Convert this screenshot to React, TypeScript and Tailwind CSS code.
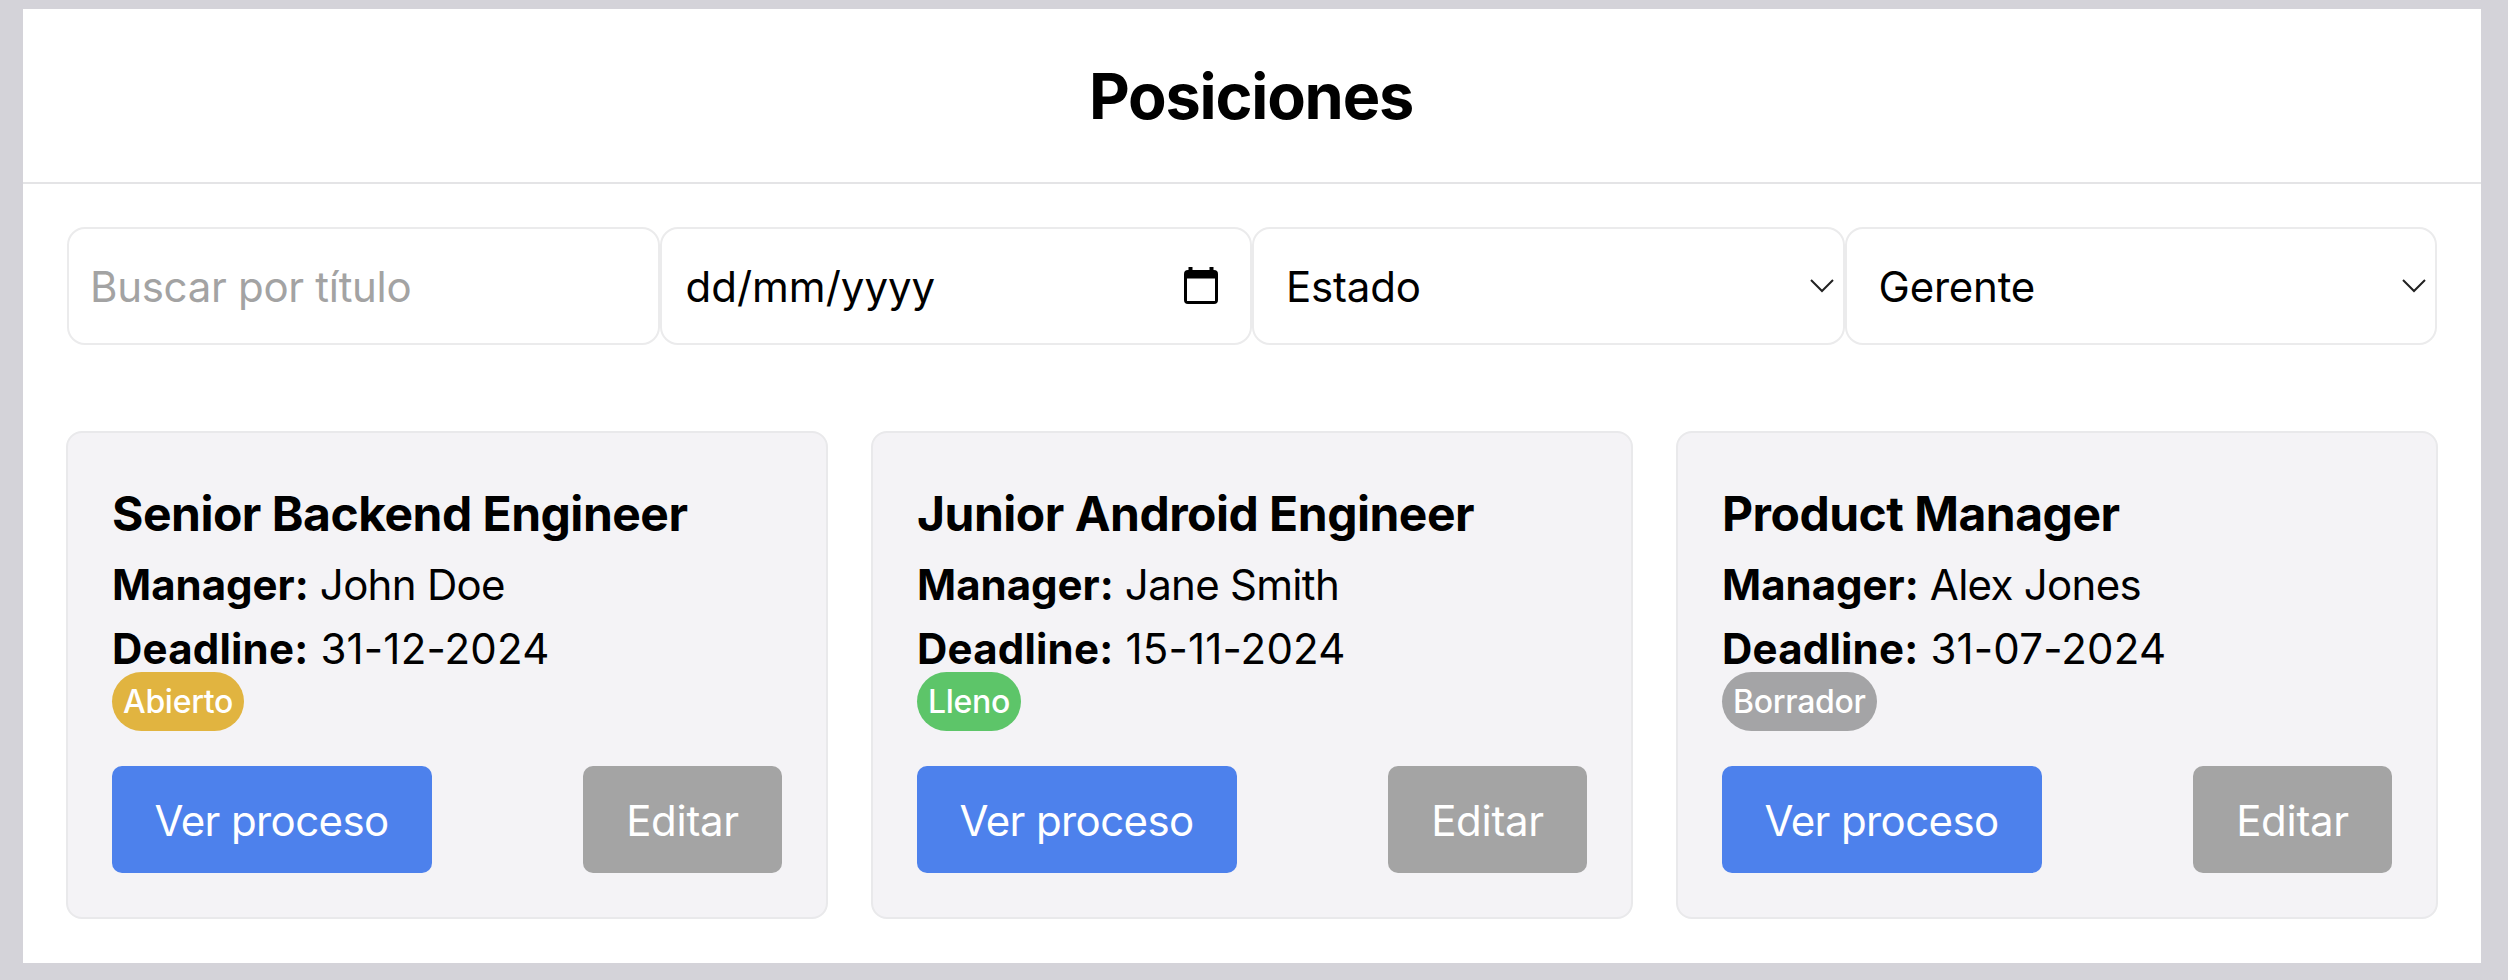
const positions = [
  { title: 'Senior Backend Engineer', manager: 'John Doe', deadline: '31-12-2024', status: 'Abierto', color: 'bg-[#e1b440]' },
  { title: 'Junior Android Engineer', manager: 'Jane Smith', deadline: '15-11-2024', status: 'Lleno', color: 'bg-[#5dc569]' },
  { title: 'Product Manager', manager: 'Alex Jones', deadline: '31-07-2024', status: 'Borrador', color: 'bg-[#a4a4a6]' },
];

const field = 'flex h-[118px] items-center justify-between rounded-[18px] border-2 border-[#ebebec] whitespace-nowrap';

function Chevron() {
  return (
    <svg width="24" height="14" viewBox="0 0 24 14" fill="none" stroke="#222" strokeWidth="2">
      <path d="M1 1l11 11L23 1" />
    </svg>
  );
}

function CalendarIcon() {
  return (
    <svg className="mb-[2px]" width="34" height="37" viewBox="0 0 34 37" fill="#000">
      <path
        fillRule="evenodd"
        d="M4 3H30Q34 3 34 7V33Q34 37 30 37H4Q0 37 0 33V7Q0 3 4 3ZM3 11.5V34H31V11.5Z"
      />
      <path d="M4.5 0H8.5V4H4.5ZM25.5 0H29.5V4H25.5Z" />
    </svg>
  );
}

export default function App() {
  return (
    <div className="h-[980px] bg-[#d4d3d9] pt-[9px] pr-[27px] pl-[23px] font-['Inter',sans-serif] text-black">
      <main className="h-[954px] bg-white">
        <header className="flex h-[175px] items-center justify-center border-b-2 border-[#e4e4e6] pt-[2px] pr-[2px]">
          <h1 className="text-[63px] leading-none font-bold tracking-[-1.2px]">Posiciones</h1>
        </header>
        <section className="grid grid-cols-4 px-[44px] pt-[43px] text-[42px]">
          <div className={`${field} pl-[21px] tracking-[-0.3px] text-[#a3a3a3]`}>Buscar por título</div>
          <div className={`${field} pr-[32px] pl-[24px]`}>
            dd/mm/yyyy
            <CalendarIcon />
          </div>
          <div className={`${field} pr-[9px] pl-[32px] tracking-[-0.2px]`}>Estado<Chevron /></div>
          <div className={`${field} pr-[9px] pl-[32px] tracking-[-0.2px]`}>Gerente<Chevron /></div>
        </section>
        <section className="grid grid-cols-3 gap-[43px] px-[43px] pt-[86px]">
          {positions.map((p) => (
            <article key={p.title} className="h-[488px] rounded-[16px] border-2 border-[#e9e9eb] bg-[#f4f3f6] px-[44px] pt-[49px]">
              <h2 className="h-[71px] text-[48px] leading-[64px] font-bold tracking-[-0.5px] whitespace-nowrap">{p.title}</h2>
              <p className="h-[64px] text-[42px] leading-[64px] tracking-[-0.7px]">
                <b className="tracking-normal">Manager:</b> {p.manager}
              </p>
              <p className="h-[55px] text-[42px] leading-[64px] tracking-[0.2px]">
                <b>Deadline:</b> {p.deadline}
              </p>
              <span className={`flex h-[59px] w-fit items-center rounded-full px-[11px] pt-px text-[32px] font-medium tracking-[-0.3px] text-white ${p.color}`}>{p.status}</span>
              <div className="mt-[35px] flex justify-between text-[42px] text-white">
                <button className="h-[107px] w-[320px] rounded-[10px] bg-[#4d81ec] pt-[2px] pr-px tracking-[-0.6px]">Ver proceso</button>
                <button className="h-[107px] w-[199px] rounded-[10px] bg-[#a4a4a4] pt-[2px] tracking-[-0.3px]">Editar</button>
              </div>
            </article>
          ))}
        </section>
      </main>
    </div>
  );
}
